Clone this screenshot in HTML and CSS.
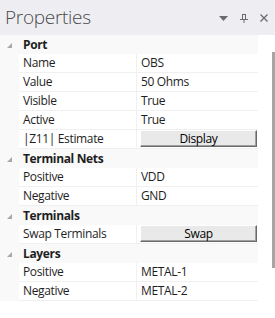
FILE: index.html
```html
<!DOCTYPE html>
<html lang="en">
<head>
    <meta charset="UTF-8">
    <title>Properties</title>
    <link rel="stylesheet" href="styles.css">
</head>
<body>
    <div class="panel">
        <div class="header">
            <span class="title">Properties</span>
            <div class="tools">
                <svg width="9" height="5" viewBox="0 0 9 5"><path d="M0 0h9L4.5 5z" fill="#6a6a6a"/></svg>
                <svg width="8" height="9" viewBox="0 0 8 9"><path d="M2 .5h4M2.5 .5v5M5.5 .5v5M0 5.5h8M4 5.5V9" stroke="#6a6a6a" fill="none"/></svg>
                <svg width="8" height="8" viewBox="0 0 8 8"><path d="M.5 .5l7 7M7.5 .5l-7 7" stroke="#6a6a6a" stroke-width="1.3"/></svg>
            </div>
        </div>

        <div class="body">
            <div class="grid">
                <div class="cat"><span class="arrow"></span>Port</div>
                <div class="item"><span class="name">Name</span><span class="value">OBS</span></div>
                <div class="item"><span class="name">Value</span><span class="value">50 Ohms</span></div>
                <div class="item"><span class="name">Visible</span><span class="value">True</span></div>
                <div class="item"><span class="name">Active</span><span class="value">True</span></div>
                <div class="item"><span class="name">|Z11| Estimate</span><span class="value"><button>Display</button></span></div>

                <div class="cat"><span class="arrow"></span>Terminal Nets</div>
                <div class="item"><span class="name">Positive</span><span class="value">VDD</span></div>
                <div class="item"><span class="name">Negative</span><span class="value">GND</span></div>

                <div class="cat"><span class="arrow"></span>Terminals</div>
                <div class="item"><span class="name">Swap Terminals</span><span class="value"><button>Swap</button></span></div>

                <div class="cat"><span class="arrow"></span>Layers</div>
                <div class="item"><span class="name">Positive</span><span class="value">METAL-1</span></div>
                <div class="item"><span class="name">Negative</span><span class="value">METAL-2</span></div>
            </div>
            <div class="scrollbar"><div class="thumb"></div></div>
        </div>
    </div>
</body>
</html>
```

FILE: styles.css
```css
* {
    margin: 0;
    padding: 0;
    box-sizing: border-box;
}

body {
    font-family: "Open Sans", "Noto Sans", sans-serif;
    font-size: 12px;
    letter-spacing: -0.35px;
    color: #1e1e1e;
    background: #fff;
    width: 275px;
    height: 318px;
    overflow: hidden;
}

.header {
    height: 35px;
    background: #eeeef2;
    display: flex;
    align-items: center;
    justify-content: space-between;
    padding: 0 7px 0 5px;
}

.title {
    font-size: 19px;
    font-weight: 300;
    color: #4a4a4a;
    letter-spacing: -0.3px;
    margin-top: -1px;
}

.tools {
    display: flex;
    align-items: center;
    gap: 12px;
    margin-top: 1px;
}

.body {
    display: flex;
}

.grid {
    width: 258px;
    background: #f9f9f9;
}

.cat {
    height: 19px;
    line-height: 19px;
    font-weight: 700;
    display: flex;
    align-items: center;
    padding-left: 7px;
}

.arrow {
    width: 0;
    height: 0;
    border-left: 5px solid transparent;
    border-bottom: 5px solid #a8a8a8;
    margin-right: 11px;
    margin-top: 2px;
}

.item {
    height: 19px;
    margin-left: 19px;
    display: flex;
    background: #fff;
    border-bottom: 1px solid #f0f0f0;
}

.name {
    width: 118px;
    padding-left: 4px;
    line-height: 18px;
    border-right: 1px solid #f0f0f0;
    white-space: nowrap;
}

.value {
    flex: 1;
    padding-left: 4px;
    line-height: 18px;
}

button {
    display: block;
    width: 117px;
    height: 17px;
    margin: 0 0 0 -1px;
    font-family: inherit;
    font-size: 12px;
    letter-spacing: inherit;
    line-height: 14px;
    color: #000;
    background: #e9e9e9;
    border: 1px solid;
    border-color: #fff #696969 #696969 #fff;
    box-shadow: inset -1px -1px 0 #a0a0a0;
}

.scrollbar {
    flex: 1;
    position: relative;
}

.thumb {
    position: absolute;
    right: 0;
    top: 17px;
    width: 3px;
    height: 216px;
    background: #a6a6a6;
}
```
